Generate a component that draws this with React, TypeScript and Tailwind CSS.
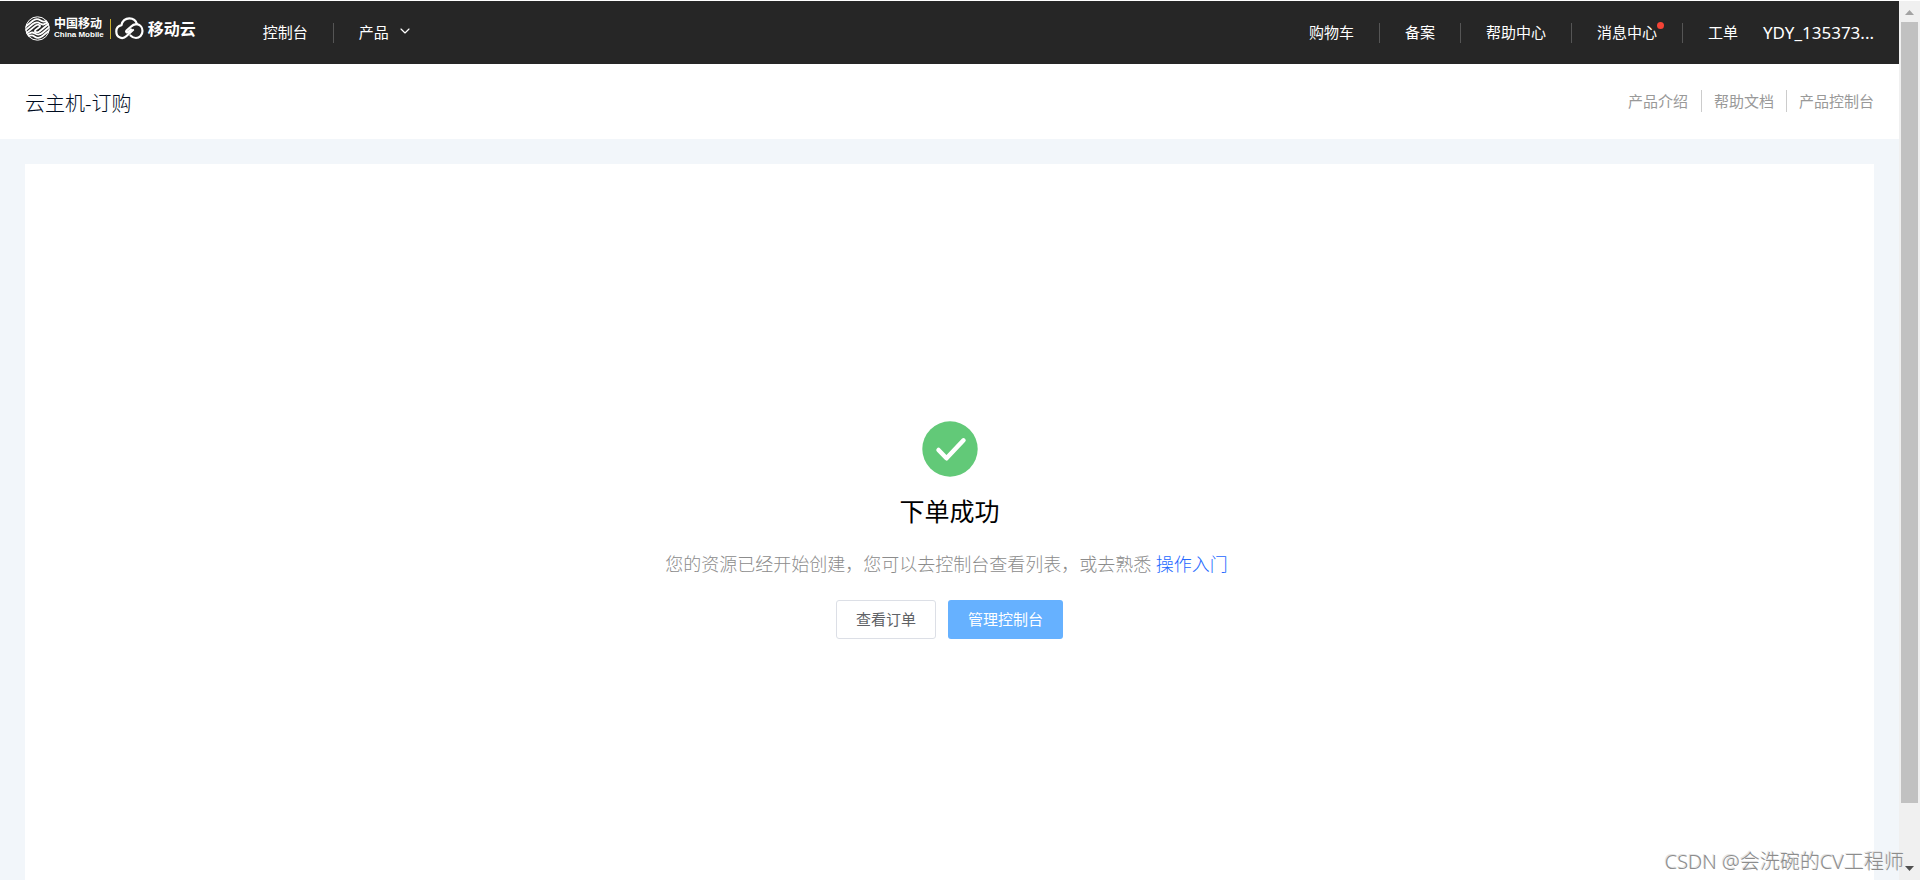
import { ChevronDown } from "lucide-react";

const LEFT_NAV = [{ label: "控制台" }, { label: "产品", arrow: true }];

const RIGHT_NAV = [
  { label: "购物车" },
  { label: "备案" },
  { label: "帮助中心" },
  { label: "消息中心", dot: true },
  { label: "工单" },
];

const DOC_LINKS = ["产品介绍", "帮助文档", "产品控制台"];

function MobileMark() {
  return (
    <svg className="h-[25px] w-[25px]" viewBox="0 0 25 25" fill="none" stroke="#fff" strokeWidth="1.8">
      <defs>
        <clipPath id="mark">
          <circle cx="12.500" cy="12.500" r="12.200" />
        </clipPath>
      </defs>
      <circle cx="12.500" cy="12.500" r="11.700" strokeWidth="1" />
      <g clipPath="url(#mark)">
        <path d="M-1 12 7.500 5C10.500 2.500 13 2.600 15.200 4.300 17.400 6 19.500 6 22 4.500" />
        <path d="M-1 15.400 7.500 8.300C10.500 5.800 13 5.900 15.200 7.600 17.400 9.200 19.500 9 25 4.500" />
        <path d="M0 18.200 10.800 9.400C12.500 8.300 14.500 9 15.200 10 15.800 11 9.200 14 9.800 15 10.600 16.600 12.600 16.800 14.400 15.500L25 6.800" />
        <path d="M0 20.500C5.500 16 7.600 15.800 9.800 17.400 12 19.100 14.500 19.200 17.500 16.700L26 9.600" />
        <path d="M3 20.500C5.500 19 7.600 19 9.800 20.700 12 22.400 14.500 22.500 17.500 20L26 13" />
      </g>
    </svg>
  );
}

function CloudMark() {
  return (
    <svg className="h-[23px] w-[29px]" viewBox="0 0 29 23" fill="none" stroke="#fff" strokeWidth="2.200" strokeLinecap="round" strokeLinejoin="round">
      <path d="M18 13 11.500 19C9.500 21 7 21.500 5 20.500 2.500 19.500 1.300 17 1.300 14.500 1.300 11 3.500 8.800 6.500 8.200 7 4 10.500 1.300 14.300 1.300 18 1.300 21 3.500 22 7.200" />
      <path d="M16 12.500 13 15.200C11.600 16 10.500 14.500 11.500 13.500L15.500 10C17.500 8 19.500 7 22 7.200 25.500 7.800 27.500 10.800 27.500 14 27.500 17.800 24.500 21 21 21 18.800 21 17 20 15.500 18.500" />
    </svg>
  );
}

function Logo() {
  return (
    <a href="#" className="flex items-center text-white">
      <MobileMark />
      <span className="ml-1 flex flex-col">
        <span className="text-[12px] leading-3 font-bold">中国移动</span>
        <span className="font-['Liberation_Sans',sans-serif] text-[8px] leading-[9px] font-bold">China Mobile</span>
      </span>
      <span className="mr-1 ml-[6px] h-5 w-px bg-[#c9ae2e]" />
      <CloudMark />
      <span className="ml-1 text-[16px] leading-5 font-bold">移动云</span>
    </a>
  );
}

function Scrollbar() {
  return (
    <div aria-hidden="true" className="flex w-[21px] shrink-0 flex-col bg-[#f0f0f0]">
      <svg className="h-[21px] w-[21px]" viewBox="0 0 21 21">
        <path d="M6 14h9l-4.500-5z" fill="#a3a3a3" />
      </svg>
      <div className="flex-1 px-[2px] pb-14">
        <div className="h-full bg-[#c1c1c1]" />
      </div>
      <svg className="h-[21px] w-[21px]" viewBox="0 0 21 21">
        <path d="M6 7h9l-4.500 5z" fill="#505050" />
      </svg>
    </div>
  );
}

export default function App() {
  return (
    <div className="relative flex h-screen flex-col overflow-hidden bg-white pt-px font-['Noto_Sans','Noto_Sans_CJK_SC',sans-serif]">
      <div className="flex min-h-0 flex-1">
        <div className="flex min-w-0 flex-1 flex-col bg-[#f2f6fa]">
          <header className="flex h-[63px] shrink-0 items-center justify-between bg-[#262626] px-[25px] text-[15px] text-white">
            <div className="flex items-center">
              <div className="mr-[42px] pb-2">
                <Logo />
              </div>
              <nav className="flex items-center divide-x divide-[#555]">
                {LEFT_NAV.map((item) => (
                  <a key={item.label} href="#" className="flex h-5 items-center px-[25px]">
                    {item.label}
                    {item.arrow && <ChevronDown className="mb-1 ml-2 h-4 w-4" strokeWidth={1.75} />}
                  </a>
                ))}
              </nav>
            </div>
            <div className="flex items-center">
              <nav className="flex items-center divide-x divide-[#555]">
                {RIGHT_NAV.map((item) => (
                  <a key={item.label} href="#" className="relative flex h-5 items-center px-[25px]">
                    {item.label}
                    {item.dot && <span className="absolute -top-px right-[18px] h-[7px] w-[7px] rounded-full bg-[#f44336]" />}
                  </a>
                ))}
              </nav>
              <a href="#" className="text-[17px]">YDY_135373...</a>
            </div>
          </header>

          <div className="flex h-[75px] shrink-0 items-center justify-between bg-white px-[25px]">
            <h1 className="pt-1 text-[20px] leading-7 font-light text-[#000c1f]">云主机-订购</h1>
            <nav className="flex items-center divide-x divide-[#ccc] pb-px text-[15px] text-[#999]">
              {DOC_LINKS.map((label) => (
                <a key={label} href="#" className="px-3 leading-[22px] first:pr-[13px] last:pr-0">{label}</a>
              ))}
            </nav>
          </div>

          <main className="mx-[25px] mt-[25px] flex flex-1 flex-col items-center bg-white pt-[257px]">
            <svg className="h-14 w-14" viewBox="0 0 56 56">
              <circle cx="28" cy="28" r="27.700" fill="#62c978" />
              <path d="M16.500 29l8 8.300 17-18" fill="none" stroke="#fff" strokeWidth="4.500" strokeLinecap="round" strokeLinejoin="round" />
            </svg>
            <h2 className="mt-4 text-[25px] leading-9 text-black">下单成功</h2>
            <p className="mt-5 pr-[6px] text-[18px] leading-[30px] font-light text-[#8c8c8c]">
              您的资源已经开始创建，您可以去控制台查看列表，或去熟悉{" "}
              <a href="#" className="text-[#2468ff]">操作入门</a>
            </p>
            <div className="mt-[21px] flex gap-3 text-[15px]">
              <button type="button" className="h-[39px] rounded-[3px] border border-[#dcdfe6] bg-white px-[19px] text-[#606266]">查看订单</button>
              <button type="button" className="h-[39px] rounded-[3px] bg-[#66b1ff] px-5 text-white">管理控制台</button>
            </div>
          </main>
        </div>
        <Scrollbar />
      </div>
      <div className="absolute right-4 bottom-1 text-[20px] leading-7 font-light text-[#8c8c8c] [text-shadow:-1px_-1px_0_#e4e4e4]">CSDN @会洗碗的CV工程师</div>
    </div>
  );
}
